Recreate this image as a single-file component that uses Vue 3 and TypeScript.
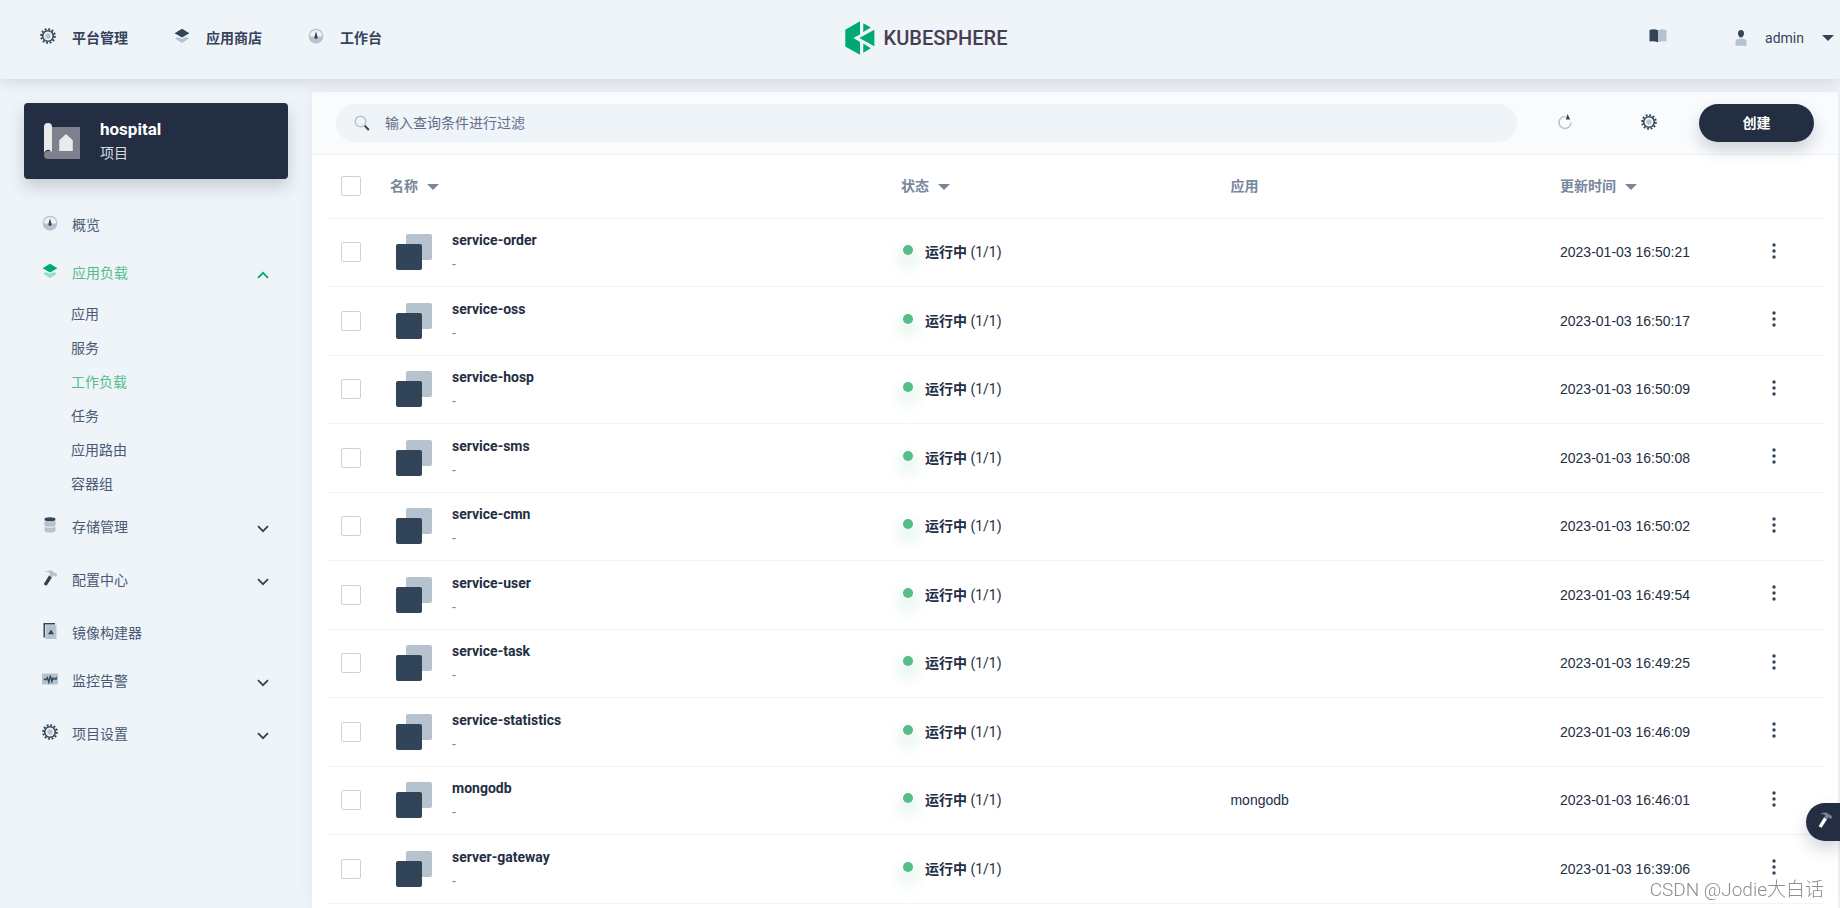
<script setup lang="ts">
import { ref } from 'vue'

interface NavItem {
  label: string
  icon: string
  expandable?: boolean
  active?: boolean
  children?: string[]
}

interface Workload {
  name: string
  app: string
  updated: string
}

const topNav = [
  { label: '平台管理', icon: 'gear' },
  { label: '应用商店', icon: 'layers' },
  { label: '工作台', icon: 'gauge' },
]

const sideNav: NavItem[] = [
  { label: '概览', icon: 'gauge' },
  {
    label: '应用负载',
    icon: 'layers',
    expandable: true,
    active: true,
    children: ['应用', '服务', '工作负载', '任务', '应用路由', '容器组'],
  },
  { label: '存储管理', icon: 'storage', expandable: true },
  { label: '配置中心', icon: 'hammer', expandable: true },
  { label: '镜像构建器', icon: 'image' },
  { label: '监控告警', icon: 'monitor', expandable: true },
  { label: '项目设置', icon: 'gear', expandable: true },
]

const currentPage = '工作负载'
const keyword = ref('')

const workloads: Workload[] = [
  { name: 'service-order', app: '', updated: '2023-01-03 16:50:21' },
  { name: 'service-oss', app: '', updated: '2023-01-03 16:50:17' },
  { name: 'service-hosp', app: '', updated: '2023-01-03 16:50:09' },
  { name: 'service-sms', app: '', updated: '2023-01-03 16:50:08' },
  { name: 'service-cmn', app: '', updated: '2023-01-03 16:50:02' },
  { name: 'service-user', app: '', updated: '2023-01-03 16:49:54' },
  { name: 'service-task', app: '', updated: '2023-01-03 16:49:25' },
  { name: 'service-statistics', app: '', updated: '2023-01-03 16:46:09' },
  { name: 'mongodb', app: 'mongodb', updated: '2023-01-03 16:46:01' },
  { name: 'server-gateway', app: '', updated: '2023-01-03 16:39:06' },
]
</script>

<template>
  <!-- Shared icon shapes, 16 x 16 grid -->
  <svg class="sprite" aria-hidden="true">
    <symbol id="i-gear" viewBox="0 0 16 16">
      <circle cx="8" cy="8" r="6.9" fill="none" class="main-line" stroke-width="1.9" stroke-dasharray="1.9 1.713" />
      <circle cx="8" cy="8" r="5.3" fill="none" class="main-line" stroke-width="1.6" />
      <circle cx="8" cy="8" r="2.7" class="soft" />
    </symbol>
    <symbol id="i-layers" viewBox="0 0 16 16">
      <path class="soft" d="M1 10.6 4.2 9 8 11l3.8-2 3.2 1.6L8 15Z" />
      <path class="main" d="M8 .8 15.4 5.200 8 9.400.6 5.200Z" />
    </symbol>
    <symbol id="i-gauge" viewBox="0 0 16 16">
      <circle cx="8" cy="8" r="6.700" fill="none" class="soft-line" stroke-width="1.200" />
      <path class="soft" d="M1 8.500H15A7 7 0 0 1 1 8.500Z" />
      <path class="main" d="M8 3.200 9.500 8.800a1.600 1.600 0 1 1-3 0Z" />
    </symbol>
    <symbol id="i-storage" viewBox="0 0 16 16">
      <path class="soft" d="M2.500 2.500h11v5.700c0 2-11 2-11 0Z" />
      <path class="soft" d="M2.500 9.800c2 1.300 9 1.300 11 0v4c0 2.400-11 2.400-11 0Z" />
      <ellipse class="main" cx="8" cy="2.200" rx="5.500" ry="1.900" />
    </symbol>
    <symbol id="i-hammer" viewBox="0 0 16 16">
      <path class="main" d="M7 5.600 10 7.200 4.600 15.800 1.600 14.300Z" />
      <path class="soft" d="M3.200 2.200C5.500.2 9.500-.2 11.500 2L15.300 4.200 14 7 11.300 5.500 10 7.200 7 5.600 8.200 3.400Q6.500 1.800 3.200 2.200Z" />
    </symbol>
    <symbol id="i-image" viewBox="0 0 16 16">
      <path class="main" d="M1.500 0H13v1.500H3v13H1.500Z" />
      <path class="soft" d="M3.500 2h11v14h-11Z" />
      <path class="main" d="m9 6.500 3 4.700H6Z" />
    </symbol>
    <symbol id="i-monitor" viewBox="0 0 16 16">
      <rect class="soft" x="0" y="2.500" width="16" height="11" rx="1" />
      <path class="main-line" fill="none" stroke-width="1.300" d="M1.800 8.500H4l1.300-2 1.500 4.800L8.300 4.600l1.600 6 1-3.600 1 1h2.300V6" />
    </symbol>
    <symbol id="i-chevron" viewBox="0 0 12 8">
      <path class="main-line" fill="none" stroke-width="1.800" d="m1 1.200 5 5 5-5" />
    </symbol>
  </svg>

  <div class="page">
    <header class="topbar">
      <nav class="topnav" aria-label="主导航">
        <a v-for="item in topNav" :key="item.label" href="#">
          <svg class="icon"><use :href="'#i-' + item.icon" /></svg>
          <span>{{ item.label }}</span>
        </a>
      </nav>
      <a class="logo" href="#">
        <svg viewBox="77 63 90 104" aria-hidden="true">
          <path
            fill="#00a971"
            d="M77 90 122 64V104L102 115 122 127V166L77 141ZM132 70 155 83 132 97ZM166 90V140L120 115ZM132 132 155 146 132 160Z"
          />
        </svg>
        <span>KUBESPHERE</span>
      </a>
      <div class="account">
        <button class="plain" type="button" aria-label="文档">
          <svg class="icon book" viewBox="0 0 18 14">
            <path class="main" d="M.5 1Q5-.5 9 1.200V13.200Q5 11.500.5 12.500Z" />
            <path class="soft" d="M9 1.200Q13-.5 17.500 1V12.500Q13 11.500 9 13.200Z" />
          </svg>
        </button>
        <button class="plain user" type="button">
          <svg class="icon" viewBox="0 0 16 16">
            <path class="soft" d="M2.500 15.800v-4Q2.500 8.500 8 8.500t5.500 3.300v4Z" />
            <path class="main" d="M8 0C10 0 11 1.500 11 3.200S10 7.500 8 7.500 5 5 5 3.200 6 0 8 0Z" />
          </svg>
          <span>admin</span>
          <i class="caret"></i>
        </button>
      </div>
    </header>

    <div class="body">
      <aside class="sidebar">
        <div class="project">
          <svg viewBox="0 0 36 36" aria-hidden="true">
            <path fill="#7c818d" d="M8 4h28v32H4a4 4 0 0 1 0-8h4Z" />
            <path fill="#e9eaec" d="M0 32V4a4 4 0 0 1 8 0v26a4 4 0 0 0-8 2Z" />
            <path fill="#b9bcc2" d="M15 17h1v11h-1ZM28 17h1v11h-1Z" />
            <path fill="#e9eaec" d="m22 11 6.500 6v11h-13V17Z" />
          </svg>
          <div>
            <strong>hospital</strong>
            <span>项目</span>
          </div>
        </div>
        <nav aria-label="项目导航">
          <ul class="menu">
            <li v-for="item in sideNav" :key="item.label" :class="{ expandable: item.expandable, active: item.active }">
              <a class="entry" href="#">
                <svg class="icon"><use :href="'#i-' + item.icon" /></svg>
                <span>{{ item.label }}</span>
                <svg v-if="item.expandable" class="chevron"><use href="#i-chevron" /></svg>
              </a>
              <ul v-if="item.children" class="submenu">
                <li v-for="child in item.children" :key="child">
                  <a href="#" :class="{ current: child === currentPage }">{{ child }}</a>
                </li>
              </ul>
            </li>
          </ul>
        </nav>
      </aside>

      <main class="panel">
        <div class="toolbar">
          <label class="search">
            <svg class="icon" viewBox="0 0 16 16" aria-hidden="true">
              <circle cx="6.500" cy="6.500" r="5.300" fill="none" class="soft-line" stroke-width="1.500" />
              <path class="main-line" stroke-width="2" d="m10.800 10.800 4 4.200" />
            </svg>
            <input v-model="keyword" type="text" aria-label="查询条件" placeholder="输入查询条件进行过滤" />
          </label>
          <button class="plain tool" type="button" aria-label="刷新">
            <svg class="icon" viewBox="0 0 16 16">
              <path class="soft-line" fill="none" stroke-width="1.500" d="M8.500 2.500A6 6 0 1 0 14 8.500" />
              <path class="main" d="M10.500 0 13.200 5.600H8.800Z" />
            </svg>
          </button>
          <button class="plain tool" type="button" aria-label="列设置">
            <svg class="icon"><use href="#i-gear" /></svg>
          </button>
          <button class="create" type="button">创建</button>
        </div>

        <table>
          <colgroup>
            <col class="c-check" />
            <col />
            <col class="c-share" />
            <col class="c-share" />
            <col class="c-time" />
            <col class="c-more" />
          </colgroup>
          <thead>
            <tr>
              <th><input type="checkbox" aria-label="全选" /></th>
              <th>名称<i class="caret"></i></th>
              <th>状态<i class="caret"></i></th>
              <th>应用</th>
              <th>更新时间<i class="caret"></i></th>
              <th></th>
            </tr>
          </thead>
          <tbody>
            <tr v-for="row in workloads" :key="row.name">
              <td><input type="checkbox" :aria-label="row.name" /></td>
              <td>
                <div class="workload">
                  <svg viewBox="0 0 36 36" aria-hidden="true">
                    <rect class="soft" x="10" width="26" height="26" rx="2" />
                    <rect class="main" y="10" width="26" height="26" rx="2" />
                  </svg>
                  <div>
                    <a href="#">{{ row.name }}</a>
                    <p>-</p>
                  </div>
                </div>
              </td>
              <td>
                <div class="status"><i></i><span><b>运行中</b> (1/1)</span></div>
              </td>
              <td>{{ row.app }}</td>
              <td>{{ row.updated }}</td>
              <td>
                <button class="plain more" type="button" aria-label="更多操作">
                  <svg class="icon" viewBox="0 0 16 16">
                    <circle class="main" cx="8" cy="2" r="1.700" />
                    <circle class="main" cx="8" cy="8" r="1.700" />
                    <circle class="main" cx="8" cy="14" r="1.700" />
                  </svg>
                </button>
              </td>
            </tr>
          </tbody>
        </table>
      </main>
    </div>

    <button class="toolbox" type="button" aria-label="工具箱">
      <svg class="icon"><use href="#i-hammer" /></svg>
    </button>
    <div class="watermark">CSDN @Jodie大白话</div>
  </div>
</template>

<style>
body {
  margin: 0;
  overflow: hidden;
}

.main {
  fill: var(--main, #324558);
}
.soft {
  fill: var(--soft, #b6c2cd);
}
.main-line {
  stroke: var(--main, #324558);
}
.soft-line {
  stroke: var(--soft, #b6c2cd);
}
</style>

<style scoped>
.sprite {
  position: absolute;
  width: 0;
  height: 0;
}

.page {
  display: flex;
  flex-direction: column;
  height: 100vh;
  overflow: hidden;
  background: #eff4f9;
  color: #242e42;
  font: 14px/20px Roboto, 'Noto Sans CJK SC', sans-serif;
}

a {
  color: inherit;
  text-decoration: none;
}

ul {
  margin: 0;
  padding: 0;
  list-style: none;
}

.icon {
  flex: none;
  width: 16px;
  height: 16px;
}

.plain {
  display: flex;
  align-items: center;
  padding: 0;
  border: 0;
  background: none;
  color: inherit;
  font: inherit;
  cursor: pointer;
}

.caret {
  display: inline-block;
  border: 6px solid transparent;
  border-top-color: currentColor;
  border-bottom: 0;
}

/* Top bar */
.topbar {
  position: relative;
  z-index: 1;
  display: grid;
  grid-template-columns: 1fr auto 1fr;
  align-items: center;
  height: 79px;
  padding: 0 6px 3px 18px;
  box-sizing: border-box;
  flex: none;
  background: #eff4f9;
  box-shadow: 0 4px 12px rgba(36, 46, 66, 0.12);
  color: #36435c;
}

.topnav {
  display: flex;
  gap: 46px;
  padding-left: 22px;
  font-weight: 700;
}

.topnav a {
  display: flex;
  align-items: center;
  gap: 16px;
}

.topnav .icon,
.entry .icon {
  padding-bottom: 4px;
}

.logo {
  display: flex;
  align-items: center;
  gap: 9px;
  color: #483d52;
  font-size: 20px;
  font-weight: 500;
  line-height: 34px;
}

.logo svg {
  width: 30px;
  height: 34px;
}

.account {
  display: flex;
  justify-content: flex-end;
  gap: 66px;
}

.account .book {
  width: 18px;
  height: 14px;
  padding-bottom: 4px;
}

.user {
  gap: 16px;
}

.user .caret {
  margin-left: 2px;
  color: #324558;
}

/* Side bar */
.body {
  display: flex;
  flex: 1;
  min-height: 0;
}

.sidebar {
  width: 264px;
  flex: none;
  padding: 24px 24px 0;
}

.project {
  display: flex;
  align-items: center;
  gap: 20px;
  height: 76px;
  padding: 0 20px;
  box-sizing: border-box;
  border-radius: 4px;
  background: #242e42;
  box-shadow: 0 8px 16px rgba(36, 46, 66, 0.2);
  color: #d8dce3;
}

.project svg {
  width: 36px;
  height: 36px;
}

.project strong,
.project span {
  display: block;
  line-height: 24px;
}

.project strong {
  color: #fff;
  font-size: 17px;
}

.menu {
  padding-top: 22px;
  color: #4a5974;
}

.entry {
  display: flex;
  align-items: center;
  gap: 14px;
  height: 48px;
  padding: 0 19px 0 18px;
}

.entry .chevron {
  width: 12px;
  height: 8px;
  margin-left: auto;
  padding-top: 4px;
}

.expandable {
  padding-bottom: 5px;
}

.active {
  color: #55bc8a;
}

.active > .entry {
  --main: #00a971;
  --soft: #90e0c5;
}

.active .chevron {
  padding: 0 0 4px;
  rotate: 180deg;
}

.submenu {
  margin-bottom: -3px;
  padding-left: 47px;
  color: #4a5974;
}

.submenu li {
  line-height: 34px;
}

.submenu .current {
  color: #55bc8a;
}

/* Content */
.panel {
  flex: 1;
  min-width: 0;
  margin: 13px 2px 0 0;
  overflow: hidden;
  border-radius: 4px 4px 0 0;
  background: #fff;
  box-shadow: 0 0 16px rgba(36, 46, 110, 0.06);
}

.toolbar {
  display: flex;
  align-items: center;
  height: 63px;
  padding: 0 24px;
  box-sizing: border-box;
  border-bottom: 1px solid #eff4f9;
  background: #f9fbfd;
}

.search {
  display: flex;
  flex: 1;
  align-items: center;
  gap: 15px;
  height: 38px;
  padding: 0 18px;
  margin-right: 6px;
  border-radius: 19px;
  background: #eff4f9;
}

.search input {
  flex: 1;
  min-width: 0;
  padding: 0;
  border: 0;
  outline: 0;
  background: none;
  color: #242e42;
  font: inherit;
}

.search input::placeholder {
  color: #5f708a;
  opacity: 1;
}

.tool {
  justify-content: center;
  width: 84px;
  height: 38px;
  padding-bottom: 3px;
}

.create {
  position: relative;
  width: 115px;
  height: 38px;
  margin-left: 8px;
  border: 0;
  border-radius: 19px;
  background: #242e42;
  box-shadow: 0 8px 16px rgba(36, 46, 66, 0.2);
  color: #fff;
  font: inherit;
  font-weight: 700;
}

table {
  width: calc(100% - 28px);
  margin: 0 14px;
  border-collapse: separate;
  border-spacing: 0;
  table-layout: fixed;
}

.c-check {
  width: 64px;
}
.c-share {
  width: 22%;
}
.c-time {
  width: 184px;
}
.c-more {
  width: 80px;
}

th,
td {
  height: 68px;
  padding: 0 0 1px;
  box-sizing: border-box;
  border-bottom: 1px solid #eff4f9;
  text-align: left;
}

th {
  height: 64px;
  padding-bottom: 2px;
  color: #79879c;
  font-weight: 700;
}

th .caret {
  margin: 0 0 1px 9px;
}

tbody tr:nth-child(even) td {
  height: 69px;
}

td {
  font-family: 'Liberation Sans', 'Noto Sans CJK SC', sans-serif;
}

input[type='checkbox'] {
  display: block;
  width: 20px;
  height: 20px;
  margin: 0 0 0 15px;
  border: 1px solid #ccd3db;
  border-radius: 2px;
  background: #fff;
  appearance: none;
}

.workload {
  display: flex;
  align-items: center;
  gap: 20px;
  padding-left: 6px;
  font-family: Roboto, 'Noto Sans CJK SC', sans-serif;
}

.workload svg {
  width: 36px;
  height: 36px;
}

.workload a {
  display: block;
  font-weight: 700;
  line-height: 24px;
}

.workload p {
  margin: 0;
  color: #79879c;
  line-height: 24px;
}

.status {
  display: flex;
  align-items: center;
  gap: 12px;
  padding-left: 2px;
  font-family: Roboto, 'Noto Sans CJK SC', sans-serif;
}

.status i {
  width: 10px;
  height: 10px;
  margin-bottom: 4px;
  border-radius: 50%;
  background: #55bc8a;
  box-shadow: 0 8px 16px 2px rgba(85, 188, 138, 0.3);
}

.more {
  padding: 0 22px 3px;
}

/* Floating pieces */
.toolbox {
  position: fixed;
  right: 0;
  bottom: 67px;
  z-index: 2;
  display: flex;
  align-items: center;
  width: 34px;
  height: 38px;
  padding: 0 0 4px 11px;
  border: 0;
  border-radius: 19px 0 0 19px;
  background: #242e42;
  box-shadow: 0 8px 16px rgba(36, 46, 66, 0.2);
  --main: #fff;
  --soft: #7c818d;
}

.watermark {
  position: fixed;
  right: 16px;
  bottom: 5px;
  z-index: 3;
  color: #8c8e92;
  font: 300 19px/26px Roboto, 'Noto Sans CJK SC', sans-serif;
  text-shadow: 1px 1px 0 #fff;
}
</style>
